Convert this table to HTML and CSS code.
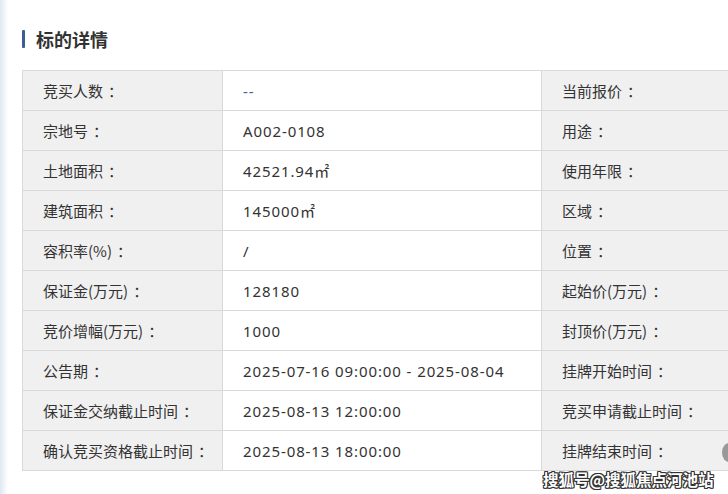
FILE: index.html
```html
<!DOCTYPE html>
<html lang="zh">
<head>
<meta charset="utf-8">
<link rel="stylesheet" href="styles.css">
</head>
<body>
<div class="edge"></div>
<div class="page">
  <h2 class="title"><span class="bar"></span>标的详情</h2>
  <table class="detail">
    <tr><td class="lab">竞买人数<span class="c">：</span></td><td class="val dash">--</td><td class="lab">当前报价<span class="c">：</span></td></tr>
    <tr><td class="lab">宗地号<span class="c">：</span></td><td class="val">A002-0108</td><td class="lab">用途<span class="c">：</span></td></tr>
    <tr><td class="lab">土地面积<span class="c">：</span></td><td class="val">42521.94㎡</td><td class="lab">使用年限<span class="c">：</span></td></tr>
    <tr><td class="lab">建筑面积<span class="c">：</span></td><td class="val">145000㎡</td><td class="lab">区域<span class="c">：</span></td></tr>
    <tr><td class="lab">容积率(%)<span class="c">：</span></td><td class="val">/</td><td class="lab">位置<span class="c">：</span></td></tr>
    <tr><td class="lab">保证金(万元)<span class="c">：</span></td><td class="val">128180</td><td class="lab">起始价(万元)<span class="c">：</span></td></tr>
    <tr><td class="lab">竞价增幅(万元)<span class="c">：</span></td><td class="val">1000</td><td class="lab">封顶价(万元)<span class="c">：</span></td></tr>
    <tr><td class="lab">公告期<span class="c">：</span></td><td class="val">2025-07-16 09:00:00 - 2025-08-04</td><td class="lab">挂牌开始时间<span class="c">：</span></td></tr>
    <tr><td class="lab">保证金交纳截止时间<span class="c">：</span></td><td class="val">2025-08-13 12:00:00</td><td class="lab">竞买申请截止时间<span class="c">：</span></td></tr>
    <tr><td class="lab">确认竞买资格截止时间<span class="c">：</span></td><td class="val">2025-08-13 18:00:00</td><td class="lab">挂牌结束时间<span class="c">：</span></td></tr>
  </table>
</div>
<div class="knob"></div>
<div class="mark">搜狐号@搜狐焦点河池站</div>
</body>
</html>
```
FILE: styles.css
```css
html, body {
  margin: 0;
  padding: 0;
  background: #fff;
  width: 728px;
  height: 494px;
  overflow: hidden;
  font-family: "Noto Sans", "Noto Sans CJK SC", sans-serif;
  color: #333;
  position: relative;
}
.edge {
  position: absolute;
  left: 0;
  top: 0;
  width: 8px;
  height: 494px;
  background: linear-gradient(to right, #dfe8f0, #ffffff);
}
.page {
  padding: 25px 0 0 22px;
}
.title {
  margin: 0;
  display: flex;
  align-items: center;
  gap: 11px;
  font-size: 18px;
  font-weight: bold;
  color: #333;
  height: 28px;
  line-height: 28px;
  font-family: "Noto Sans CJK SC", sans-serif;
}
.bar {
  width: 3px;
  height: 18px;
  background: #3d5e94;
  border-radius: 1px;
}
.detail {
  margin-top: 17px;
  border-collapse: collapse;
  width: 720px;
  table-layout: fixed;
  font-size: 15px;
}
.detail td {
  border: 1px solid #d9d9d9;
  height: 39px;
  padding: 0 0 0 20px;
  white-space: nowrap;
  overflow: hidden;
}
.detail td:nth-child(1) { width: 179px; }
.detail td:nth-child(2) { width: 298px; }
.lab {
  background: #f0f0f0;
  font-family: "Noto Sans CJK SC", sans-serif;
}
.c {
  font-family: "Noto Sans CJK JP", sans-serif;
  margin-left: 5px;
}
.val {
  background: #fff;
  font-family: "Noto Sans", "Noto Sans CJK SC", sans-serif;
  letter-spacing: 0.9px;
}
.dash { color: #3d5e94; }
.knob {
  position: absolute;
  left: 722px;
  top: 443px;
  width: 14px;
  height: 19px;
  border-radius: 50%;
  background: #999;
}
.mark {
  position: absolute;
  left: 543px;
  top: 468px;
  font-family: "Noto Sans CJK SC", sans-serif;
  font-size: 15.5px;
  font-weight: bold;
  color: #fff;
  text-shadow: 1px 1px 0 #333, -1px -1px 0 #333, 1px -1px 0 #333, -1px 1px 0 #333, 0 1px 0 #333, 1px 0 0 #333, 0 -1px 0 #333, -1px 0 0 #333;
}
```
